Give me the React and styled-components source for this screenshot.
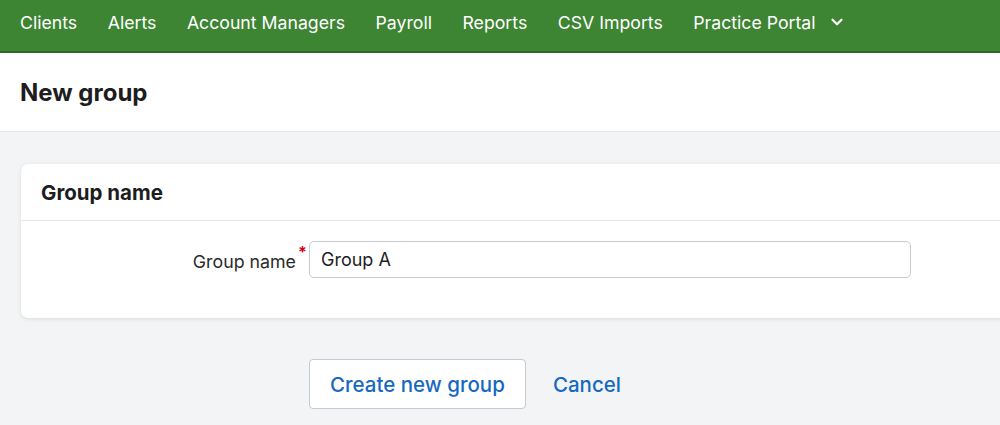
import React from "react"
import styled, { createGlobalStyle } from "styled-components"
import { FiChevronDown } from "react-icons/fi"

const GlobalStyle = createGlobalStyle`
  body {
    margin: 0;
    font-family: "Inter", "Noto Sans", sans-serif;
    background: #f3f4f6;
    overflow: hidden;
  }
`

// top navigation
const Nav = styled.nav`
  height: 53px;
  box-sizing: border-box;
  padding: 0 20px 7px;
  background: #3d8433;
  border-bottom: 2px solid #2c6b24;
  display: flex;
  align-items: center;
  gap: 30.5px;
`
const NavItem = styled.a`
  color: #fff;
  font-size: 17.7px;
  display: flex;
  align-items: center;
  gap: 12px;
  cursor: pointer;
`

// page title
const Header = styled.div`
  background: #fff;
  height: 78px;
  padding: 0 20px;
  display: flex;
  align-items: center;
  border-bottom: 1px solid #e8eaed;
`
const Title = styled.h1`
  margin: 0;
  font-size: 24px;
  font-weight: 700;
  color: #1d1d1f;
`

const Main = styled.main`
  padding: 32px 0 0 21px;
  width: 1020px;
`

// card
const Card = styled.section`
  background: #fff;
  border-radius: 7px;
  box-shadow: 0 1px 4px rgba(0, 0, 0, 0.1);
`
const CardHeader = styled.div`
  height: 56px;
  padding: 0 20px;
  display: flex;
  align-items: center;
  border-bottom: 1px solid #e3e5e8;
`
const CardTitle = styled.h2`
  margin: 0;
  font-size: 20.5px;
  font-weight: 700;
  color: #1d1d1f;
`
const CardBody = styled.div`
  padding: 20px 0 40px;
`
const Row = styled.div`
  display: flex;
  align-items: center;
`
const Label = styled.label`
  width: 275px;
  text-align: right;
  font-size: 17.8px;
  color: #2a2a2c;
  position: relative;
  padding-right: 13px;
  padding-top: 4px;
`
const Required = styled.span`
  position: absolute;
  right: 2px;
  top: -5px;
  color: #d0021b;
  font-size: 16px;
  font-weight: 700;
`
const Input = styled.input`
  width: 602px;
  height: 37px;
  box-sizing: border-box;
  border: 1px solid #c5cad1;
  border-radius: 5px;
  padding: 0 11px;
  font-size: 18px;
  font-family: inherit;
  color: #1d1d1f;
  outline: none;
`

// actions
const Actions = styled.div`
  display: flex;
  align-items: center;
  gap: 27px;
  padding: 41px 0 0 288px;
`
const Button = styled.button`
  height: 50px;
  padding: 0 20px;
  background: #fff;
  border: 1px solid #c5cad1;
  border-radius: 4px;
  color: #1769c0;
  font-size: 20.5px;
  font-weight: 500;
  font-family: inherit;
  cursor: pointer;
`
const LinkButton = styled.a`
  color: #1769c0;
  font-size: 20.5px;
  font-weight: 500;
  cursor: pointer;
`

const navItems = ["Clients", "Alerts", "Account Managers", "Payroll", "Reports", "CSV Imports"]

const App = () => {
  return (
    <>
      <GlobalStyle />
      <Nav>
        {navItems.map((item) => (
          <NavItem key={item}>{item}</NavItem>
        ))}
        <NavItem>
          Practice Portal <FiChevronDown size={18} strokeWidth={3} />
        </NavItem>
      </Nav>
      <Header>
        <Title>New group</Title>
      </Header>
      <Main>
        <Card>
          <CardHeader>
            <CardTitle>Group name</CardTitle>
          </CardHeader>
          <CardBody>
            <Row>
              <Label>
                Group name<Required>*</Required>
              </Label>
              <Input defaultValue="Group A" />
            </Row>
          </CardBody>
        </Card>
        <Actions>
          <Button>Create new group</Button>
          <LinkButton>Cancel</LinkButton>
        </Actions>
      </Main>
    </>
  )
}

export default App
